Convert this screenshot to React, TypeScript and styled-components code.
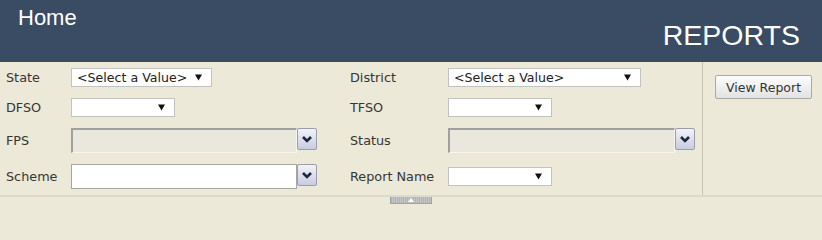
import React from "react";
import styled, { createGlobalStyle } from "styled-components";

const GlobalStyle = createGlobalStyle`
  html, body {
    margin: 0;
    padding: 0;
    background: #ece9d8;
  }
  * {
    box-sizing: border-box;
  }
`;

const Header = styled.header`
  height: 62px;
  background: #3a4c63;
  color: #ffffff;
  display: flex;
  justify-content: space-between;
  font-family: "Liberation Sans", Arial, sans-serif;
  padding: 0 22px 0 18px;
`;

const HomeLink = styled.div`
  align-self: flex-start;
  font-size: 22px;
  line-height: 22px;
  padding-top: 7px;
`;

const PageTitle = styled.div`
  align-self: flex-end;
  font-size: 28.5px;
  line-height: 28.5px;
  padding-bottom: 13px;
`;

const Body = styled.div`
  display: flex;
  background: #ece9d8;
`;

const Form = styled.div`
  width: 703px;
  border-right: 1px solid #c6c3b4;
  display: grid;
  grid-template-columns: 65px 279px 98px 1fr;
  grid-template-rows: 19px 19px 25px 25px;
  row-gap: 11px;
  align-items: center;
  padding: 6px 0 6px 6px;
  font-family: "DejaVu Sans", Verdana, sans-serif;
`;

const Label = styled.div`
  font-size: 12.8px;
  color: #363636;
  white-space: nowrap;
`;

const Select = styled.div<{ $width: number }>`
  width: ${({ $width }) => $width}px;
  height: 19px;
  background: #ffffff;
  border: 1px solid #c2c2c2;
  display: flex;
  align-items: center;
  justify-content: space-between;
  padding: 0 9px 0 5px;
  font-size: 12.6px;
  color: #222222;
  white-space: nowrap;
`;

const Combo = styled.div`
  display: flex;
  align-items: flex-start;
  align-self: start;
`;

const TextBox = styled.div<{ $disabled?: boolean; $width: number }>`
  width: ${({ $width }) => $width}px;
  height: 25px;
  background: ${({ $disabled }) => ($disabled ? "#eae8dc" : "#ffffff")};
  border-style: solid;
  border-width: ${({ $disabled }) => ($disabled ? "2px 1px 1px 2px" : "1px")};
  border-color: ${({ $disabled }) =>
    $disabled ? "#a0a0a0 #f6f5ef #f6f5ef #a0a0a0" : "#a6a6a6"};
`;

const DropButton = styled.div`
  width: 20px;
  height: 22px;
  border: 1px solid #9c9cab;
  border-radius: 2px;
  background: linear-gradient(#f2f2f8, #c9cce0);
  display: flex;
  align-items: center;
  justify-content: center;
`;

const Actions = styled.div`
  flex: 1;
  padding: 13px 0 0 12px;
`;

const ViewButton = styled.button`
  width: 97px;
  height: 24px;
  border: 1px solid #a9a9a9;
  border-radius: 2px;
  background: linear-gradient(#fdfdfd, #e2e2e2);
  font-family: "DejaVu Sans", Verdana, sans-serif;
  font-size: 12.5px;
  color: #333333;
  padding: 0;
`;

const Footer = styled.div`
  border-top: 2px solid #dcd9cd;
  height: 13px;
  display: flex;
  justify-content: center;
`;

const Toggle = styled.div`
  width: 42px;
  height: 7px;
  background: repeating-linear-gradient(90deg, #b4b4b4 0 1px, #c4c4c4 1px 2px);
  border: 1px solid #a2a2a2;
  border-top: none;
  display: flex;
  justify-content: center;
  align-items: center;
`;

const Arrow = () => (
  <svg width="7" height="7" viewBox="0 0 7 7">
    <polygon points="0,0.5 7,0.5 3.5,6.5" fill="#111" />
  </svg>
);

const Chevron = () => (
  <svg width="12" height="10" viewBox="0 0 12 10">
    <path d="M2 3 L6 7 L10 3" fill="none" stroke="#1c2740" strokeWidth="2.6" />
  </svg>
);

const Dropdown = ({ width, value }: { width: number; value?: string }) => (
  <Select $width={width}>
    <span>{value}</span>
    <Arrow />
  </Select>
);

const ComboBox = ({ width, disabled }: { width: number; disabled?: boolean }) => (
  <Combo>
    <TextBox $width={width} $disabled={disabled} />
    <DropButton>
      <Chevron />
    </DropButton>
  </Combo>
);

const App = () => {
  return (
    <>
      <GlobalStyle />
      <Header>
        <HomeLink>Home</HomeLink>
        <PageTitle>REPORTS</PageTitle>
      </Header>
      <Body>
        <Form>
          <Label>State</Label>
          <Dropdown width={141} value="<Select a Value>" />
          <Label>District</Label>
          <Dropdown width={193} value="<Select a Value>" />

          <Label>DFSO</Label>
          <Dropdown width={104} />
          <Label>TFSO</Label>
          <Dropdown width={104} />

          <Label>FPS</Label>
          <ComboBox width={226} disabled />
          <Label>Status</Label>
          <ComboBox width={227} disabled />

          <Label>Scheme</Label>
          <ComboBox width={226} />
          <Label>Report Name</Label>
          <Dropdown width={104} />
        </Form>
        <Actions>
          <ViewButton>View Report</ViewButton>
        </Actions>
      </Body>
      <Footer>
        <Toggle>
          <svg width="6" height="4" viewBox="0 0 6 4">
            <polygon points="0,4 6,4 3,0" fill="#ffffff" />
          </svg>
        </Toggle>
      </Footer>
    </>
  );
};

export default App;
